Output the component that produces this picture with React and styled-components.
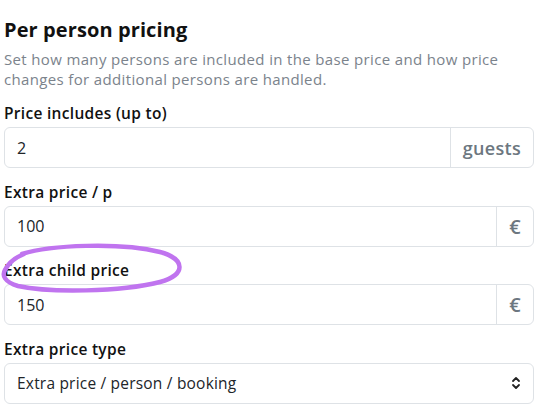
import React from "react";
import styled, { createGlobalStyle } from "styled-components";

const Global = createGlobalStyle`
  * { box-sizing: border-box; }
  body { margin: 0; background: #fff; font-family: "Open Sans", "Noto Sans", sans-serif; color: #212529; }
`;

const Page = styled.div`
  position: relative;
  padding: 17px 16px 0 4px;
  width: 550px;
`;

const Title = styled.h2`
  margin: 0 0 6px;
  font-size: 20px;
  font-weight: 700;
  line-height: 26px;
  letter-spacing: 0.1px;
  color: #111;
`;

const Desc = styled.p`
  margin: 0 0 14px;
  font-size: 15px;
  line-height: 20px;
  letter-spacing: 0.35px;
  color: #7b838c;
`;

const Field = styled.div`
  margin-bottom: 13.5px;
`;

const Label = styled.label`
  display: block;
  font-size: 15.5px;
  font-weight: 600;
  line-height: 20px;
  letter-spacing: 0.3px;
  margin-bottom: 4px;
  color: #111;
`;

const Group = styled.div`
  display: flex;
  height: 41px;
  border: 1px solid #dee2e6;
  border-radius: 6px;
  overflow: hidden;
`;

const Input = styled.div`
  flex: 1;
  display: flex;
  align-items: center;
  padding: 0 12px;
  font-size: 16px;
  color: #212529;
`;

const Addon = styled.div`
  display: flex;
  align-items: center;
  padding: 0 12px;
  border-left: 1px solid #dee2e6;
  font-size: ${p => (p.$wide ? "18px" : "20px")};
  font-weight: 600;
  letter-spacing: 0.3px;
  color: #6c7780;
`;

const Select = styled.div`
  display: flex;
  align-items: center;
  justify-content: space-between;
  height: 41px;
  border: 1px solid #dee2e6;
  border-radius: 6px;
  padding: 0 12px;
  font-size: 15.5px;
  letter-spacing: 0.2px;
`;

const Circle = styled.svg`
  position: absolute;
  left: 0;
  top: 239px;
  pointer-events: none;
`;

const Chevrons = () => (
  <svg width="10" height="14" viewBox="0 0 10 14" fill="none" stroke="#222" strokeWidth="1.8" strokeLinecap="round" strokeLinejoin="round">
    <path d="M2 5l3-3 3 3" />
    <path d="M2 9l3 3 3-3" />
  </svg>
);

export default function App() {
  return (
    <>
      <Global />
      <Page>
        <Title>Per person pricing</Title>
        <Desc>Set how many persons are included in the base price and how price changes for additional persons are handled.</Desc>
        <Field>
          <Label>Price includes (up to)</Label>
          <Group>
            <Input>2</Input>
            <Addon $wide>guests</Addon>
          </Group>
        </Field>
        <Field>
          <Label>Extra price / p</Label>
          <Group>
            <Input>100</Input>
            <Addon>€</Addon>
          </Group>
        </Field>
        <Field>
          <Label>Extra child price</Label>
          <Group>
            <Input>150</Input>
            <Addon>€</Addon>
          </Group>
        </Field>
        <Field>
          <Label>Extra price type</Label>
          <Select>
            <span>Extra price / person / booking</span>
            <Chevrons />
          </Select>
        </Field>
        <Circle width="190" height="60" viewBox="0 0 190 60">
          <path d="M22 15 C 50 6, 120 3, 160 13 C 186 20, 186 36, 160 43 C 120 53, 50 54, 18 47 C 4 43, 2 36, 5 31 C 8 25, 14 19, 24 15"
            fill="none" stroke="#c074ef" strokeWidth="4.5" strokeLinecap="round" />
        </Circle>
      </Page>
    </>
  );
}
